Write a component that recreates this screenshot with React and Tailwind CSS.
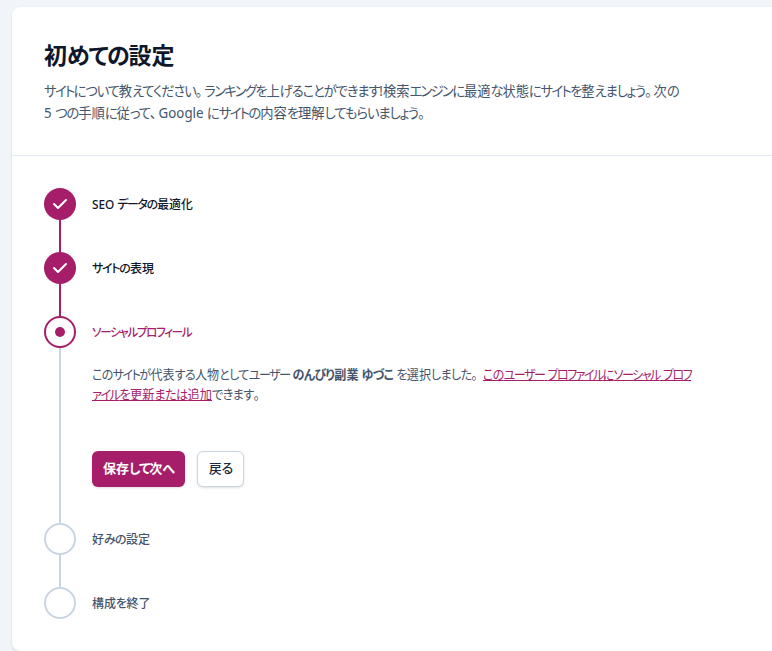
import React from 'react';

const cuerpo = { kata: 'tracking-[-0.12em]', hira: 'tracking-[-0.08em]', punto: 'tracking-[0.15em]' };
const detalle = { kata: 'tracking-[-0.13em]', hira: 'tracking-[-0.055em]', punto: 'tracking-[0.2em]' };
const rotulo = { kata: 'tracking-[-0.11em]', hira: 'tracking-[-0.06em]', punto: '' };
const titular = { kata: '', hira: 'tracking-[-0.06em]', punto: '' };

const Texto = ({ children, estilo = cuerpo }) => (
  <>
    {children.split(/([ァ-ヶー]+|[ぁ-ゖ]+|[、。]+)/).map((parte, i) => {
      let clase = '';
      if (/^[ァ-ヶー]/.test(parte)) clase = estilo.kata;
      else if (/^[ぁ-ゖ]/.test(parte)) clase = estilo.hira;
      else if (/^[、。]/.test(parte)) clase = estilo.punto;
      return <span key={i} className={clase}>{parte}</span>;
    })}
  </>
);

const Linea = ({ escala = '', children }) => (
  <span className={`block w-max origin-left whitespace-pre ${escala}`}>{children}</span>
);

const Circulo = ({ estado }) => {
  if (estado === 'hecho') {
    return (
      <span className="w-8 h-8 shrink-0 rounded-full bg-[#a61e69] flex items-center justify-center">
        <svg className="w-5 h-5" viewBox="0 0 20 20" fill="#fff">
          <path fillRule="evenodd" clipRule="evenodd" d="M16.707 5.293a1 1 0 010 1.414l-8 8a1 1 0 01-1.414 0l-4-4a1 1 0 011.414-1.414L8 12.586l7.293-7.293a1 1 0 011.414 0z" />
        </svg>
      </span>
    );
  }
  if (estado === 'actual') {
    return (
      <span className="w-8 h-8 shrink-0 rounded-full border-2 border-[#a61e69] bg-white flex items-center justify-center">
        <span className="w-2.5 h-2.5 rounded-full bg-[#a61e69]"></span>
      </span>
    );
  }
  return <span className="w-8 h-8 shrink-0 rounded-full border-2 border-slate-300 bg-white"></span>;
};

const Paso = ({ estado, titulo, color, alto = 'h-16', escala = '', ultimo, children }) => (
  <li className={`flex gap-4 ${alto}`}>
    <div className="flex flex-col items-center">
      <Circulo estado={estado} />
      {!ultimo && <span className={`w-0.5 flex-1 ${estado === 'hecho' ? 'bg-[#a61e69]' : 'bg-slate-300'}`}></span>}
    </div>
    <div className="min-w-0">
      <h3 className={`h-8 pt-0.5 flex items-center text-[12px] font-medium ${color}`}>
        <Linea escala={escala}><Texto estilo={rotulo}>{titulo}</Texto></Linea>
      </h3>
      {children}
    </div>
  </li>
);

const App = () => (
  <div className="h-[651px] overflow-hidden bg-slate-100 pl-3 pt-[7px] font-['Noto_Sans','Noto_Sans_CJK_JP',sans-serif] [font-feature-settings:'palt']">
    <main className="h-[644px] rounded-l-lg bg-white shadow">
      {/* Encabezado */}
      <header className="h-[149px] border-b border-slate-200 px-8 pt-8">
        <h1 className="h-8 text-[23px] leading-8 font-bold text-slate-900 whitespace-nowrap">
          <Texto estilo={titular}>初めての設定</Texto>
        </h1>
        <p className="mt-[9px] text-[14px] leading-[22px] text-slate-600">
          <Linea escala="scale-x-[0.946]"><Texto>サイトについて教えてください。ランキングを上げることができます!検索エンジンに最適な状態にサイトを整えましょう。次の</Texto></Linea>
          <Linea escala="scale-x-[0.95]"><Texto>5 つの手順に従って、Google にサイトの内容を理解してもらいましょう。</Texto></Linea>
        </p>
      </header>

      {/* Pasos */}
      <ol className="px-8 pt-8">
        <Paso estado="hecho" titulo="SEO データの最適化" color="text-slate-900" escala="scale-x-[0.985]" />
        <Paso estado="hecho" titulo="サイトの表現" color="text-slate-900" />
        <Paso estado="actual" titulo="ソーシャルプロフィール" color="text-[#a61e69]" alto="h-[207px]" escala="scale-x-[0.955]">
          <p className="mt-4 text-[13px] leading-5 text-slate-600">
            <Linea escala="scale-x-[0.928]">
              <Texto estilo={detalle}>このサイトが代表する人物としてユーザー </Texto>
              <b className="font-semibold"><Texto estilo={detalle}>のんびり副業 ゆづこ</Texto></b>
              <Texto estilo={detalle}> を選択しました。 </Texto>
              <a href="#" className="text-[#a61e69] underline"><Texto estilo={detalle}>このユーザー プロファイルにソーシャル プロフ</Texto></a>
            </Linea>
            <Linea escala="scale-x-[0.94]">
              <a href="#" className="text-[#a61e69] underline"><Texto estilo={detalle}>ァイルを更新または追加</Texto></a>
              <Texto estilo={detalle}>できます。</Texto>
            </Linea>
          </p>
          <div className="mt-[47px] flex gap-3 text-[13px] font-medium whitespace-nowrap">
            <button className="w-[93px] h-9 rounded-md bg-[#a61e69] font-bold text-white shadow-sm"><Texto>保存して次へ</Texto></button>
            <button className="w-[47px] h-9 rounded-md border border-slate-300 bg-white text-slate-800 shadow-sm"><Texto>戻る</Texto></button>
          </div>
        </Paso>
        <Paso estado="pendiente" titulo="好みの設定" color="text-slate-600" />
        <Paso estado="pendiente" titulo="構成を終了" color="text-slate-600" alto="h-8" ultimo />
      </ol>
    </main>
  </div>
);

export default App;
